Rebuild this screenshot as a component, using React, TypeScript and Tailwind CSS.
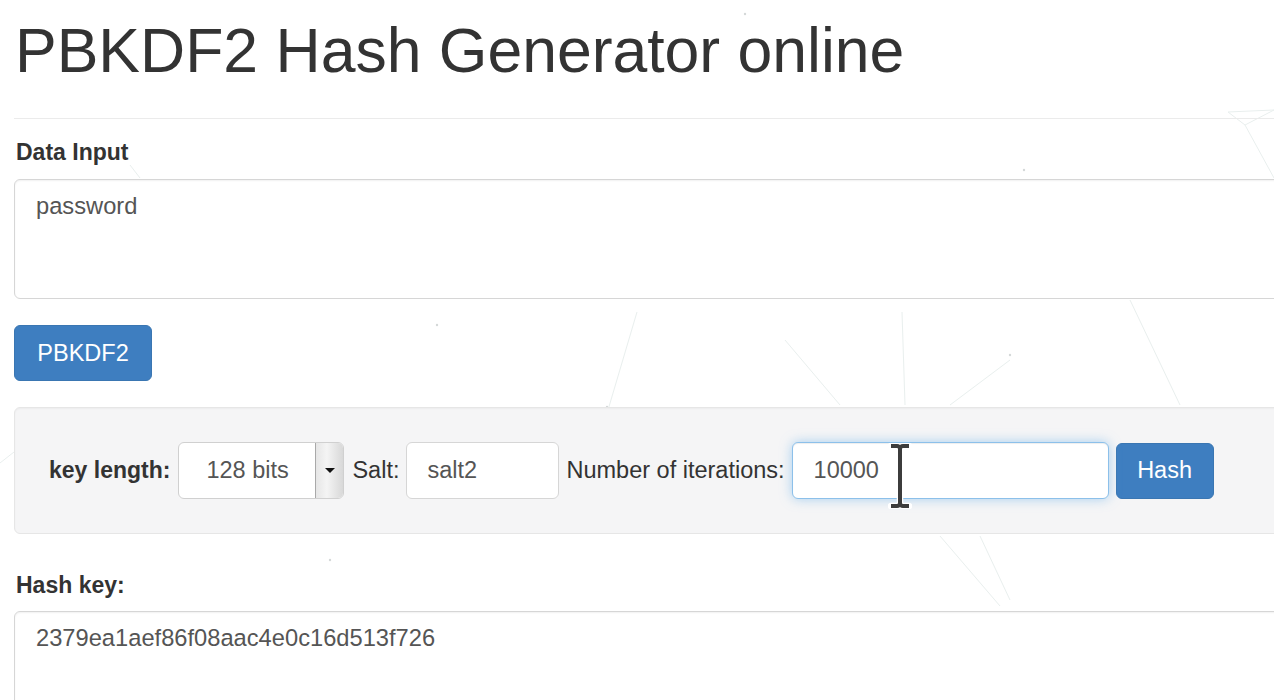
import React from 'react';

// faint network lines drawn behind the form
function Backdrop() {
  const lines: [number, number, number, number][] = [
    [637, 312, 608, 410],
    [0, 463, 14, 452],
    [1228, 112, 1274, 110],
    [1228, 112, 1245, 125],
    [1245, 125, 1274, 110],
    [1245, 125, 1274, 178],
    [785, 340, 840, 405],
    [902, 312, 905, 405],
    [1010, 360, 950, 405],
    [1130, 300, 1180, 405],
    [940, 536, 1000, 606],
    [980, 536, 1010, 600],
    [130, 165, 140, 178],
  ];
  const dots: [number, number][] = [
    [745, 14],
    [437, 325],
    [607, 407],
    [1024, 170],
    [330, 560],
    [1010, 355],
  ];
  return (
    <svg className="pointer-events-none absolute inset-0 h-full w-full" width="1274" height="700">
      {lines.map(([x1, y1, x2, y2], i) => (
        <line key={i} x1={x1} y1={y1} x2={x2} y2={y2} stroke="#e9efee" strokeWidth="1" />
      ))}
      {dots.map(([cx, cy], i) => (
        <circle key={i} cx={cx} cy={cy} r="1.2" fill="#d4d9d9" />
      ))}
    </svg>
  );
}

function IBeam() {
  const d = 'M3 3h6c1.5 0 3 1 3 3c0-2 1.5-3 3-3h6M12 6v54M3 63h6c1.5 0 3-1 3-3c0 2 1.5 3 3 3h6';
  return (
    <svg
      className="pointer-events-none absolute left-[96px] top-[1px]"
      width="24"
      height="66"
      viewBox="0 0 24 66"
    >
      <path d={d} fill="none" stroke="#ffffff" strokeWidth="6.5" strokeLinecap="round" />
      <path d={d} fill="none" stroke="#3c3c3c" strokeWidth="4" strokeLinecap="butt" />
    </svg>
  );
}

export default function App() {
  return (
    <div className="relative h-screen w-full overflow-hidden bg-white font-['Liberation_Sans',Arial,sans-serif] text-[23.5px] leading-[33px] text-[#333]">
      <Backdrop />
      <div className="relative w-[1310px] pl-[14px]">
        <h1 className="ml-[1px] mt-[16px] text-[62.5px] font-normal leading-[68px] text-[#333]">
          PBKDF2 Hash Generator online
        </h1>
        <div className="mt-[34px] border-t border-[#ebebeb]" />

        <label className="mt-[17px] block pl-[2px] text-[23px] font-bold">Data Input</label>
        <textarea
          readOnly
          defaultValue="password"
          className="mt-[10px] block h-[120px] w-full resize-none rounded-[6px] border border-[#d6d6d6] bg-white px-[21px] py-[10px] text-[23.7px] text-[#555] outline-none shadow-[inset_0_1px_2px_rgba(0,0,0,0.06)]"
        />

        <button className="mt-[26px] block h-[56px] w-[138px] rounded-[6px] border border-[#3a76b2] bg-[#3e7ec0] text-white">
          PBKDF2
        </button>

        <div className="mt-[26px] flex h-[127px] items-center gap-[8px] rounded-[6px] border border-[#e6e6e6] bg-[#f5f5f6] pl-[34px] shadow-[inset_0_1px_2px_rgba(0,0,0,0.04)]">
          <span className="text-[23px] font-bold">key length:</span>
          <div className="flex h-[57px] w-[166px] items-stretch overflow-hidden rounded-[6px] border border-[#d0d0d0] bg-white text-[#555]">
            <span className="flex flex-1 items-center pl-[27px]">128 bits</span>
            <span className="flex w-[28px] items-center justify-center border-l border-[#a9a9a9] bg-[linear-gradient(to_right,#e6e6e6,#f4f4f4_40%,#d8d8d8)]">
              <span className="h-0 w-0 border-x-[5px] border-t-[5px] border-x-transparent border-t-[#111]" />
            </span>
          </div>
          <span>Salt:</span>
          <input
            readOnly
            defaultValue="salt2"
            className="-ml-[1px] h-[57px] w-[153px] rounded-[6px] border border-[#d6d6d6] bg-white px-[20px] text-[#555] outline-none"
          />
          <span className="-ml-[1px]">Number of iterations:</span>
          <div className="relative -ml-[1px]">
            <input
              readOnly
              defaultValue="10000"
              className="h-[57px] w-[317px] rounded-[6px] border border-[#8cc0ea] bg-white px-[21px] text-[#555] outline-none shadow-[inset_0_1px_1px_rgba(0,0,0,0.07),0_0_12px_rgba(102,175,233,0.55)]"
            />
            <IBeam />
          </div>
          <button className="-ml-[1px] h-[56px] w-[98px] rounded-[6px] border border-[#3a76b2] bg-[#3e7ec0] text-white">
            Hash
          </button>
        </div>

        <label className="mt-[35px] block pl-[2px] text-[23px] font-bold">Hash key:</label>
        <textarea
          readOnly
          defaultValue="2379ea1aef86f08aac4e0c16d513f726"
          className="mt-[9px] block h-[120px] w-full resize-none rounded-[6px] border border-[#d6d6d6] bg-white px-[21px] py-[10px] text-[23.7px] text-[#555] outline-none shadow-[inset_0_1px_2px_rgba(0,0,0,0.06)]"
        />
      </div>
    </div>
  );
}
